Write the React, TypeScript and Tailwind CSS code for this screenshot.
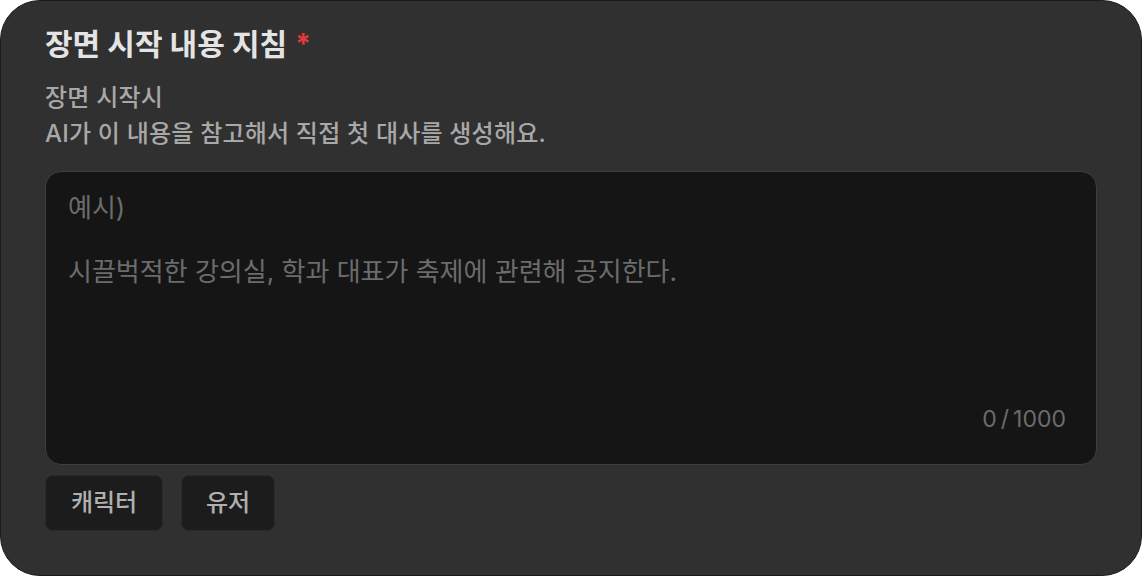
import React from "react";

export default function App() {
  const font = { fontFamily: '"Inter", "Noto Sans CJK KR", sans-serif' };
  return (
    <div className="w-[1142px] h-[576px] bg-white" style={font}>
      <div className="w-full h-full rounded-[40px] bg-[#303030] border border-[#1a1a1a] pl-[44px] pr-[44px] pt-[23px] flex flex-col">
        <div className="flex items-start gap-[8px] text-[30px] leading-[40px] font-bold text-[#e4e4e4]">
          <span>장면 시작 내용 지침</span>
          <span className="text-[#e5393b] text-[28px]">*</span>
        </div>
        <div className="mt-[16px] text-[24px] leading-[36px] font-medium tracking-[0.2px] text-[#a8a8a8]">
          <div>장면 시작시</div>
          <div>AI가 이 내용을 참고해서 직접 첫 대사를 생성해요.</div>
        </div>
        <div className="mt-[19px] h-[294px] shrink-0 rounded-[16px] bg-[#151515] border border-[#3e3e3e] flex flex-col pl-[22px] pr-[30px] pt-[18px] pb-[27px] text-[26px] leading-[36px] text-[#6c6c6c]">
          <div>예시)</div>
          <div className="mt-[28px]">시끌벅적한 강의실, 학과 대표가 축제에 관련해 공지한다.</div>
          <div className="mt-auto self-end text-[23px] flex">
            <span>0</span>
            <span className="mx-[4px]">/</span>
            <span>1000</span>
          </div>
        </div>
        <div className="mt-[10px] flex gap-[18px]">
          <button className="w-[118px] h-[56px] rounded-[8px] bg-[#1c1c1c] border border-[#282828] text-[24px] font-medium text-[#b0b0b0]">
            캐릭터
          </button>
          <button className="w-[94px] h-[56px] rounded-[8px] bg-[#1c1c1c] border border-[#282828] text-[24px] font-medium text-[#b0b0b0]">
            유저
          </button>
        </div>
      </div>
    </div>
  );
}
